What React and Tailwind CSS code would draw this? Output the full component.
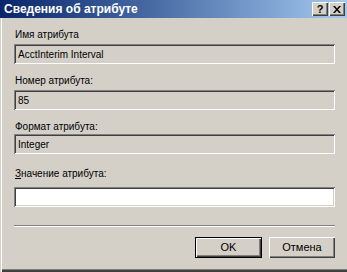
import React from "react";

const sunken = "shadow-[inset_1px_1px_0_#808080,inset_-1px_-1px_0_#ffffff,inset_2px_2px_0_#404040,inset_-2px_-2px_0_#d4d0c8]";
const raised = "shadow-[inset_1px_1px_0_#ffffff,inset_-1px_-1px_0_#404040,inset_-2px_-2px_0_#808080]";

function Label({ children, className = "" }) {
  return (
    <div className={"h-[13px] leading-[13px] text-[10px] text-black pl-[1px] " + className}>{children}</div>
  );
}

function Field({ value, white, className = "" }) {
  return (
    <div
      className={
        "h-[20px] w-[321px] flex items-center pl-[4px] text-[10px] text-black " +
        (white ? "bg-white " : "bg-[#d4d0c8] ") +
        sunken +
        " " +
        className
      }
    >
      {value}
    </div>
  );
}

export default function App() {
  return (
    <div
      className="w-[347px] h-[272px] bg-[#d4d0c8] overflow-hidden flex flex-col relative shadow-[inset_1px_0_0_#d4d0c8,inset_2px_0_0_#ffffff,inset_0_-2px_0_#404040,inset_0_-3px_0_#808080]"
      style={{ fontFamily: '"Liberation Sans", Arial, sans-serif' }}
    >
      {/* Title bar */}
      <div className="h-[18px] flex items-center bg-gradient-to-r from-[#0a246a] to-[#a6caf0]">
        <div className="pl-[4px] text-white font-bold text-[12px] leading-[18px] flex-1">
          Сведения об атрибуте
        </div>
        <div className="flex gap-[1px] mr-[2px]">
          <div className={"w-[16px] h-[14px] bg-[#d4d0c8] flex items-center justify-center text-black font-bold text-[11px] leading-[14px] " + raised}>
            ?
          </div>
          <div className={"w-[16px] h-[14px] bg-[#d4d0c8] flex items-center justify-center " + raised}>
            <svg width="8" height="7" viewBox="0 0 8 7">
              <path d="M0 0h2l2 2.5L6 0h2L5 3.5 8 7H6L4 4.5 2 7H0l3-3.5z" fill="#000" />
            </svg>
          </div>
        </div>
      </div>

      <div className="flex flex-col pl-[14px]">
        <Label className="mt-[10px]">Имя атрибута</Label>
        <Field value="AcctInterim Interval" className="mt-[3px]" />

        <Label className="mt-[10px]">Номер атрибута:</Label>
        <Field value="85" className="mt-[3px]" />

        <Label className="mt-[10px]">Формат атрибута:</Label>
        <Field value="Integer" className="mt-[1px]" />

        <Label className="mt-[13px]">
          <span className="underline">З</span>начение атрибута:
        </Label>
        <Field value="" white className="mt-[7px]" />

        <div className="mt-[18px] w-[321px] h-[2px] border-t border-t-[#808080] border-b border-b-white" />

        <div className="mt-[10px] w-[321px] flex justify-end gap-[7px]">
          <div className="w-[67px] h-[21px] border border-black flex">
            <div className={"flex-1 bg-[#d4d0c8] flex items-center justify-center text-[11px] text-black " + raised}>
              OK
            </div>
          </div>
          <div className={"w-[66px] h-[21px] bg-[#d4d0c8] flex items-center justify-center text-[11px] text-black " + raised}>
            Отмена
          </div>
        </div>
      </div>
    </div>
  );
}
